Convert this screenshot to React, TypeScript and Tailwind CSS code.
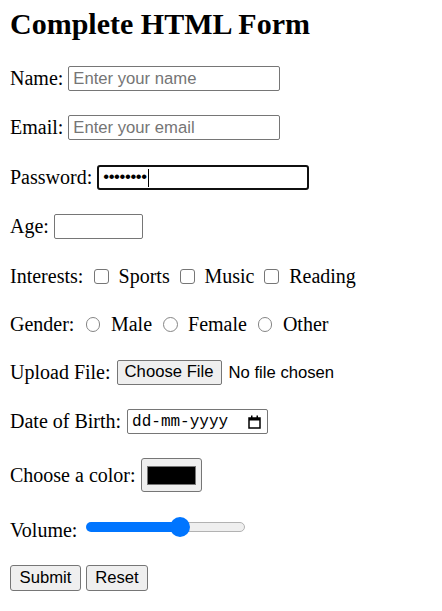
import React from 'react';

const sans = "font-['Liberation_Sans',Arial,sans-serif]";

const Row: React.FC<{ className?: string; children: React.ReactNode }> = ({ className = '', children }) => (
  <div className={`flex items-center ${className}`}>{children}</div>
);

const Label: React.FC<{ children: React.ReactNode; className?: string }> = ({ children, className = '' }) => (
  <span className={`whitespace-pre leading-[23px] ${className}`}>{children}</span>
);

const Check: React.FC<{ label: string; first?: boolean }> = ({ label, first }) => (
  <>
    <input
      type="checkbox"
      className={`${first ? 'ml-[10.5px]' : 'ml-[10px]'} h-[15px] w-[15px] appearance-none rounded-[3px] border border-[#767676] bg-white`}
    />
    <Label className="ml-[9.75px]">{label}</Label>
  </>
);

const Radio: React.FC<{ label: string; first?: boolean }> = ({ label, first }) => (
  <>
    <input
      type="radio"
      name="gender"
      className={`${first ? 'ml-[11.5px]' : 'ml-[11px]'} h-[14.5px] w-[14.5px] appearance-none rounded-full border border-[#858585] bg-white`}
    />
    <Label className="ml-[10.5px]">{label}</Label>
  </>
);

export default function App() {
  return (
    <div className="min-h-[611px] bg-white pl-[10px] font-['Liberation_Serif','Times_New_Roman',serif] text-[20px] text-black">
      <h1 className="mt-[6px] text-[30px] font-bold leading-[35px]">Complete HTML Form</h1>

      <form className="flex flex-col" onSubmit={e => e.preventDefault()}>
        <Row className="mt-[25px] h-[25px]">
          <Label>Name:</Label>
          <input
            type="text"
            placeholder="Enter your name"
            className={`ml-[5px] h-[25px] w-[212px] rounded-[2px] border border-[#767676] px-[4px] ${sans} text-[16.67px] placeholder:text-[#757575]`}
          />
        </Row>

        <Row className="mt-[24px] h-[25px]">
          <Label>Email:</Label>
          <input
            type="email"
            placeholder="Enter your email"
            className={`ml-[5px] h-[25px] w-[212px] rounded-[2px] border border-[#767676] px-[4px] ${sans} text-[16.67px] placeholder:text-[#757575]`}
          />
        </Row>

        <Row className="mt-[25px] h-[25px]">
          <Label>Password:</Label>
          {/* focused password field with caret */}
          <div className="ml-[5px] flex h-[25px] w-[212px] items-center rounded-[3px] border-2 border-[#101010] pl-[4px]">
            <span className={`${sans} text-[16.67px] leading-none tracking-[-0.4px]`}>••••••••</span>
            <span className="ml-[1px] h-[18px] w-[1px] bg-black" />
          </div>
        </Row>

        <Row className="mt-[24px] h-[25px]">
          <Label>Age:</Label>
          <input
            type="text"
            className={`ml-[5px] h-[25px] w-[89px] rounded-[2px] border border-[#767676] px-[4px] ${sans} text-[16.67px]`}
          />
        </Row>

        <Row className="mt-[25px] h-[25px]">
          <Label>Interests:</Label>
          <Check label="Sports" first />
          <Check label="Music" />
          <Check label="Reading" />
        </Row>

        <Row className="mt-[23px] h-[25px]">
          <Label>Gender:</Label>
          <Radio label="Male" first />
          <Radio label="Female" />
          <Radio label="Other" />
        </Row>

        <Row className="mt-[23px] h-[25px]">
          <Label>Upload File:</Label>
          <button
            type="button"
            className={`ml-[6px] h-[25px] w-[105px] rounded-[2px] border border-[#767676] bg-[#efefef] ${sans} text-[16.67px] leading-none`}
          >
            Choose File
          </button>
          <span className={`ml-[7px] ${sans} text-[16.67px]`}>No file chosen</span>
        </Row>

        <Row className="mt-[24px] h-[25px]">
          <Label>Date of Birth:</Label>
          <div className="ml-[6px] flex h-[25px] w-[141px] items-center justify-between rounded-[2px] border border-[#767676] pl-[4px] pr-[6px]">
            <span className="font-['Liberation_Mono','DejaVu_Sans_Mono',monospace] text-[16px] leading-none">dd-mm-yyyy</span>
            <svg width="13" height="14" viewBox="0 0 13 14" fill="none">
              <rect x="1" y="3" width="11" height="10" stroke="#000" strokeWidth="1.5" />
              <rect x="1" y="3" width="11" height="2.5" fill="#000" />
              <rect x="3" y="0.5" width="1.5" height="3" fill="#000" />
              <rect x="8.5" y="0.5" width="1.5" height="3" fill="#000" />
            </svg>
          </div>
        </Row>

        <Row className="mt-[24px] h-[34px]">
          <Label>Choose a color:</Label>
          <div className="ml-[5.5px] flex h-[34px] w-[61px] items-center justify-center rounded-[3px] border border-[#767676] bg-[#efefef]">
            <div className="h-[19px] w-[49px] border border-[#777777] bg-black" />
          </div>
        </Row>

        <Row className="mt-[23px] h-[24px]">
          <Label className="mt-[6px]">Volume:</Label>
          <div className="relative ml-[9px] flex h-[20px] w-[159px] items-center">
            <div className="h-[10px] w-[94px] rounded-l-full bg-[#0075ff]" />
            <div className="h-[10px] flex-1 rounded-r-full border border-[#b2b2b2] bg-[#efefef]" />
            <div className="absolute left-[84px] top-0 h-[20px] w-[20px] rounded-full bg-[#0075ff]" />
          </div>
        </Row>

        <Row className="mt-[26px] h-[26px] gap-[5px]">
          <button
            type="submit"
            className={`h-[26px] w-[71px] rounded-[3px] border border-[#767676] bg-[#efefef] ${sans} text-[16.67px] leading-none`}
          >
            Submit
          </button>
          <button
            type="reset"
            className={`h-[26px] w-[62px] rounded-[3px] border border-[#767676] bg-[#efefef] ${sans} text-[16.67px] leading-none`}
          >
            Reset
          </button>
        </Row>
      </form>
    </div>
  );
}
